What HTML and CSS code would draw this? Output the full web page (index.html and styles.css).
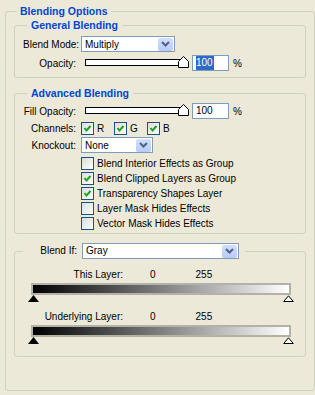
FILE: index.html
```html
<!DOCTYPE html>
<html lang="en">
<head>
    <meta charset="UTF-8">
    <title>Blending Options</title>
    <link rel="stylesheet" href="styles.css">
</head>
<body>

    <fieldset class="group group-outer">
        <legend>Blending Options</legend>

        <!-- General Blending -->
        <fieldset class="group group-general">
            <legend>General Blending</legend>
            <div class="row">
                <label class="row-label">Blend Mode:</label>
                <div class="select select-mode">
                    <span class="select-value">Multiply</span>
                    <span class="select-btn"><svg width="9" height="6" viewBox="0 0 9 6"><path d="M1 1 L4.5 4.5 L8 1" fill="none" stroke="#4d6185" stroke-width="2"/></svg></span>
                </div>
            </div>
            <div class="row row-opacity">
                <label class="row-label">Opacity:</label>
                <div class="amount">
                    <div class="slider">
                        <div class="slider-track"></div>
                        <svg class="slider-thumb" width="11" height="12" viewBox="0 0 11 12"><path d="M5.5 0.5 L10.5 5.5 L10.5 11.5 L0.5 11.5 L0.5 5.5 Z" fill="#fff" stroke="#000"/></svg>
                    </div>
                    <div class="field"><span class="field-sel">100</span></div>
                    <span class="pct">%</span>
                </div>
            </div>
        </fieldset>

        <!-- Advanced Blending -->
        <fieldset class="group group-advanced">
            <legend>Advanced Blending</legend>
            <div class="row">
                <label class="row-label">Fill Opacity:</label>
                <div class="amount">
                    <div class="slider">
                        <div class="slider-track"></div>
                        <svg class="slider-thumb" width="11" height="12" viewBox="0 0 11 12"><path d="M5.5 0.5 L10.5 5.5 L10.5 11.5 L0.5 11.5 L0.5 5.5 Z" fill="#fff" stroke="#000"/></svg>
                    </div>
                    <div class="field">100</div>
                    <span class="pct">%</span>
                </div>
            </div>
            <div class="row row-channels">
                <label class="row-label">Channels:</label>
                <div class="channels">
                    <span class="check-item channel"><span class="check is-on"><svg width="11" height="11" viewBox="0 0 11 11"><path d="M2.5 5 L4.5 7.5 L8.5 3" fill="none" stroke="#21a121" stroke-width="2"/></svg></span>R</span>
                    <span class="check-item channel"><span class="check is-on"><svg width="11" height="11" viewBox="0 0 11 11"><path d="M2.5 5 L4.5 7.5 L8.5 3" fill="none" stroke="#21a121" stroke-width="2"/></svg></span>G</span>
                    <span class="check-item channel"><span class="check is-on"><svg width="11" height="11" viewBox="0 0 11 11"><path d="M2.5 5 L4.5 7.5 L8.5 3" fill="none" stroke="#21a121" stroke-width="2"/></svg></span>B</span>
                </div>
            </div>
            <div class="row row-knockout">
                <label class="row-label">Knockout:</label>
                <div class="select select-knockout">
                    <span class="select-value">None</span>
                    <span class="select-btn"><svg width="9" height="6" viewBox="0 0 9 6"><path d="M1 1 L4.5 4.5 L8 1" fill="none" stroke="#4d6185" stroke-width="2"/></svg></span>
                </div>
            </div>
            <div class="check-list">
                <div class="check-item"><span class="check"></span>Blend Interior Effects as Group</div>
                <div class="check-item"><span class="check is-on"><svg width="11" height="11" viewBox="0 0 11 11"><path d="M2.5 5 L4.5 7.5 L8.5 3" fill="none" stroke="#21a121" stroke-width="2"/></svg></span>Blend Clipped Layers as Group</div>
                <div class="check-item"><span class="check is-on"><svg width="11" height="11" viewBox="0 0 11 11"><path d="M2.5 5 L4.5 7.5 L8.5 3" fill="none" stroke="#21a121" stroke-width="2"/></svg></span>Transparency Shapes Layer</div>
                <div class="check-item"><span class="check"></span>Layer Mask Hides Effects</div>
                <div class="check-item"><span class="check"></span>Vector Mask Hides Effects</div>
            </div>
        </fieldset>

        <!-- Blend If -->
        <fieldset class="group group-blendif">
            <legend>
                <label class="row-label blendif-label">Blend If:</label>
                <div class="select select-blendif">
                    <span class="select-value">Gray</span>
                    <span class="select-btn"><svg width="9" height="6" viewBox="0 0 9 6"><path d="M1 1 L4.5 4.5 L8 1" fill="none" stroke="#4d6185" stroke-width="2"/></svg></span>
                </div>
            </legend>

            <div class="range">
                <div class="range-head">
                    <span class="range-label">This Layer:</span>
                    <span class="range-min">0</span>
                    <span class="range-max">255</span>
                </div>
                <div class="range-bar"></div>
                <div class="range-stops">
                    <svg width="11" height="7" viewBox="0 0 11 7"><path d="M5.5 0 L11 7 L0 7 Z" fill="#000"/></svg>
                    <svg width="11" height="7" viewBox="0 0 11 7"><path d="M5.5 0.8 L10.3 6.5 L0.7 6.5 Z" fill="#fff" stroke="#000"/></svg>
                </div>
            </div>

            <div class="range range-under">
                <div class="range-head">
                    <span class="range-label">Underlying Layer:</span>
                    <span class="range-min">0</span>
                    <span class="range-max">255</span>
                </div>
                <div class="range-bar"></div>
                <div class="range-stops">
                    <svg width="11" height="7" viewBox="0 0 11 7"><path d="M5.5 0 L11 7 L0 7 Z" fill="#000"/></svg>
                    <svg width="11" height="7" viewBox="0 0 11 7"><path d="M5.5 0.8 L10.3 6.5 L0.7 6.5 Z" fill="#fff" stroke="#000"/></svg>
                </div>
            </div>
        </fieldset>
    </fieldset>

</body>
</html>
```

FILE: styles.css
```css
body {
    margin: 0;
    background-color: #ece9d8;
    font-family: "Liberation Sans", Arial, sans-serif;
    font-size: 10px;
    color: #000;
}
.group {
    box-sizing: border-box;
    min-width: 0;
    margin: 0;
    padding: 0 8px;
    border: 1px solid #d0d0bf;
    border-radius: 3px;
}
.group legend {
    padding: 0 4px;
    margin-left: 4px;
    line-height: 12px;
    font-size: 10.5px;
    font-weight: bold;
    color: #0046d5;
}
.group-outer {
    margin: 5px 0 0 5px;
    width: 310px;
    height: 386px;
}
.group-outer > legend {
    padding: 0 3px;
    margin-left: 3px;
}
.group-general {
    margin-top: 2px;
    padding-top: 5px;
    padding-bottom: 6px;
}
.group-advanced {
    margin-top: 9px;
    padding-top: 4px;
    padding-bottom: 2px;
}
.group-blendif {
    margin-top: 9px;
    padding-top: 10px;
    padding-bottom: 12px;
}
.group-blendif > legend {
    display: flex;
    align-items: center;
    margin-left: 0;
    padding: 0 6px 0 0;
    line-height: 16px;
    font-size: 10px;
    font-weight: normal;
    color: #000;
}

/* rows */
.row {
    display: grid;
    grid-template-columns: 53px auto;
    column-gap: 5px;
    align-items: center;
    height: 16px;
}
.row-label {
    text-align: right;
    white-space: nowrap;
}
.row-opacity {
    margin-top: 3px;
}
.row-channels {
    margin-top: 2px;
    height: 14px;
}
.row-knockout {
    margin-top: 2px;
}
.blendif-label {
    width: 54px;
    margin-right: 5px;
}

/* dropdowns */
.select {
    box-sizing: border-box;
    display: flex;
    align-items: center;
    justify-content: space-between;
    height: 16px;
    padding: 0 1px 0 3px;
    background-color: #fff;
    border: 1px solid #7f9db9;
}
.select-mode { width: 94px; }
.select-knockout { width: 72px; }
.select-blendif { width: 157px; }
.select-btn {
    display: flex;
    align-items: center;
    justify-content: center;
    width: 15px;
    height: 13px;
    border-radius: 2px;
    background: linear-gradient(#d3e0fd, #b6cbf7);
}

/* slider + number field */
.amount {
    display: flex;
    align-items: center;
}
.slider {
    position: relative;
    width: 108px;
    height: 16px;
}
.slider-track {
    box-sizing: border-box;
    width: 99px;
    height: 7px;
    margin: 4px 0 0 4px;
    background-color: #fff;
    border: 1px solid #000;
}
.slider-thumb {
    position: absolute;
    left: 97px;
    top: 1px;
}
.field {
    box-sizing: border-box;
    width: 37px;
    height: 16px;
    margin-left: 3px;
    padding-left: 3px;
    line-height: 14px;
    background-color: #fff;
    border: 1px solid #7f9db9;
}
.field-sel {
    display: inline-block;
    padding-right: 1px;
    background-color: #316ac5;
    color: #fff;
}
.pct {
    margin-left: 4px;
}

/* checkboxes */
.check-item {
    display: flex;
    align-items: center;
    height: 15px;
}
.check {
    box-sizing: border-box;
    display: flex;
    align-items: center;
    justify-content: center;
    width: 13px;
    height: 13px;
    margin-right: 3px;
    border: 1px solid #1c5180;
    background: linear-gradient(135deg, #dcdcd7, #fff);
}
.channels {
    display: flex;
}
.channel {
    width: 33px;
    height: 14px;
}
.check-list {
    margin: 3px 0 0 58px;
}

/* blend if ranges */
.range {
    padding-left: 8px;
}
.range-under {
    margin-top: 9px;
}
.range-head {
    display: flex;
    line-height: 12px;
}
.range-label {
    width: 92px;
    text-align: right;
}
.range-min {
    margin-left: 27px;
}
.range-max {
    margin-left: 40px;
}
.range-bar {
    box-sizing: border-box;
    width: 260px;
    height: 12px;
    margin-top: 2px;
    border: 2px solid #b4b2a6;
    background: linear-gradient(to right, #000, #fff);
}
.range-stops {
    display: flex;
    justify-content: space-between;
    width: 266px;
    height: 7px;
    margin-left: -3px;
}
.range-stops svg {
    display: block;
}
```
